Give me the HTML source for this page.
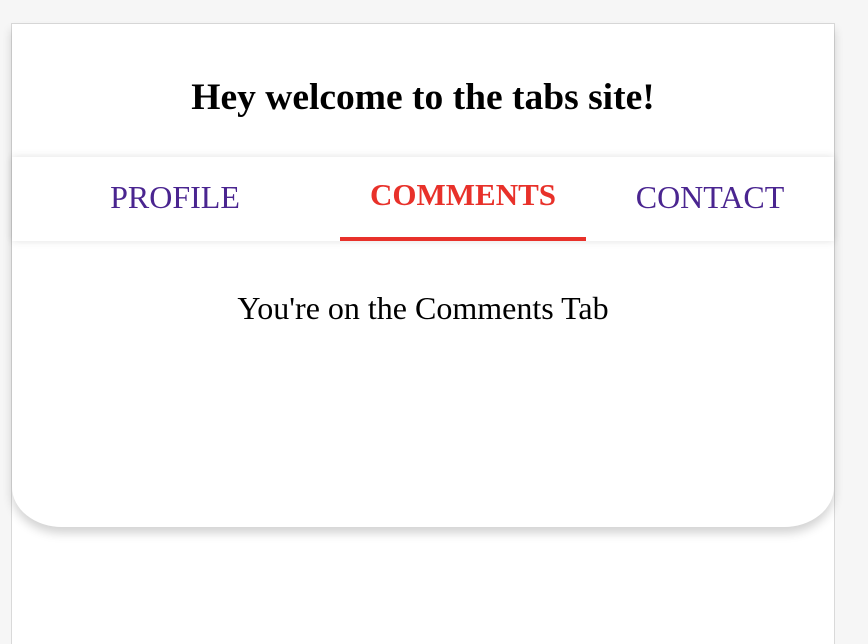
<!DOCTYPE html>
<html><head><style>
html,body{margin:0;padding:0}
body{width:868px;height:622px;background:#f6f6f6;position:relative;overflow:hidden;font-family:"Liberation Serif",serif}
.frame{position:absolute;left:11px;top:23px;width:822px;height:620px;background:#fff;border:1px solid #d9d9d9;border-bottom:none}
.card{position:absolute;left:0;top:0;width:822px;height:503px;background:#fff;border-radius:0 0 50px 50px/0 0 40px 40px;box-shadow:0 6px 10px rgba(0,0,0,0.18)}
h1{position:absolute;left:0;right:0;top:54px;margin:0;text-align:center;font-size:37.5px;font-weight:bold;color:#000;line-height:40px}
.bar{position:absolute;left:0;top:133px;width:822px;height:84px;background:#fff;box-shadow:0 0 8px rgba(0,0,0,0.12)}
.t{position:absolute;top:20px;font-size:32px;line-height:40px;color:#4a2590;transform:translateX(-50%);white-space:nowrap}
.act{color:#e8312a;font-weight:bold;top:18px;font-size:31px}
.ul{position:absolute;left:328px;top:80px;width:246px;height:4px;background:#e8312a}
.body{position:absolute;left:0;right:0;top:266px;text-align:center;font-size:32px;line-height:36px}
</style></head><body>
<div class="frame"><div class="card">
<h1>Hey welcome to the tabs site!</h1>
<div class="bar">
<span class="t" style="left:163px">PROFILE</span>
<span class="t act" style="left:451px">COMMENTS</span>
<span class="t" style="left:698px">CONTACT</span>
<div class="ul"></div>
</div>
<div class="body">You're on the Comments Tab</div>
</div></div>
</body></html>
